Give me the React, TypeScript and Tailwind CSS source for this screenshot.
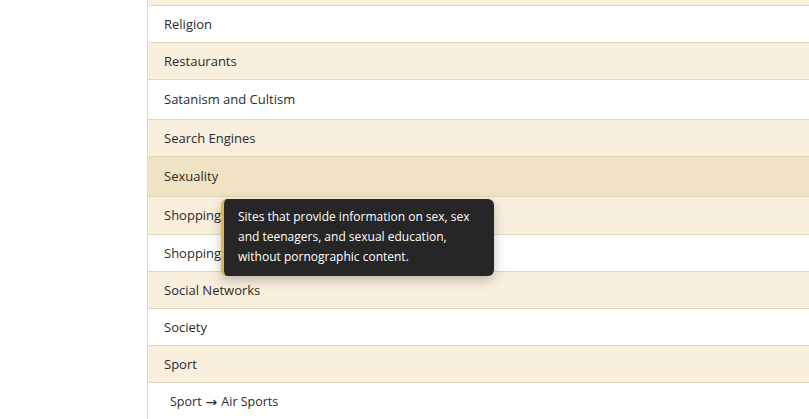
import React from "react";

type Row = { label: string; h: number; bg: string; indent?: boolean };

const rows: Row[] = [
  { label: "Religion", h: 37, bg: "bg-white" },
  { label: "Restaurants", h: 37, bg: "bg-[#f9efdd]" },
  { label: "Satanism and Cultism", h: 40, bg: "bg-white" },
  { label: "Search Engines", h: 37, bg: "bg-[#f9efdd]" },
  { label: "Sexuality", h: 40, bg: "bg-[#efe3c3]" },
  { label: "Shopping", h: 38, bg: "bg-[#f9efdd]" },
  { label: "Shopping", h: 37, bg: "bg-white" },
  { label: "Social Networks", h: 37, bg: "bg-[#f9efdd]" },
  { label: "Society", h: 37, bg: "bg-white" },
  { label: "Sport", h: 37, bg: "bg-[#f9efdd]" },
];

export default function App() {
  return (
    <div
      className="w-[809px] h-[419px] overflow-hidden bg-white flex"
      style={{ fontFamily: '"Open Sans", "Noto Sans", sans-serif' }}
    >
      <div className="w-[147px] shrink-0" />
      <div className="relative flex-1 border-l border-[#e3d8bb] flex flex-col">
        <div className="h-[6px] shrink-0 bg-[#f9efdd] border-b border-[#e3d8bb]" />
        {rows.map((r, i) => (
          <div
            key={i}
            style={{ height: r.h }}
            className={`shrink-0 flex items-center border-b border-[#e3d8bb] pt-px pl-[16px] text-[13px] text-[#2b2b2b] ${r.bg}`}
          >
            {r.label}
          </div>
        ))}
        <div className="h-[37px] shrink-0 flex items-center pt-px pl-[22px] text-[12.5px] text-[#2b2b2b] bg-white">
          Sport <span className="mx-[4px] text-[14px]" style={{ fontFamily: '"DejaVu Sans", sans-serif' }}>→</span> Air Sports
        </div>
        <div className="absolute left-[73px] top-[199px] w-[273px] h-[77px] rounded-[6px] bg-[#262626] border-l-[3px] border-[#e5b449] shadow-[0_4px_12px_rgba(0,0,0,0.25)] pl-[14px] pr-3 pt-[8px] text-[12px] leading-[20px] text-white">
          Sites that provide information on sex, sex
          <br />
          and teenagers, and sexual education,
          <br />
          without pornographic content.
        </div>
      </div>
    </div>
  );
}
